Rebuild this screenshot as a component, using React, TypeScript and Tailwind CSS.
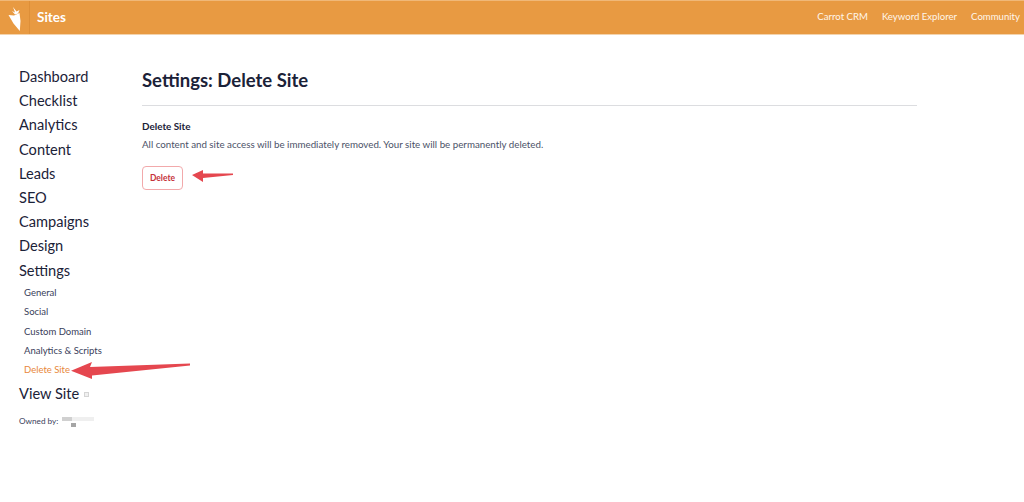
import React from "react";

const topItems = ["Dashboard", "Checklist", "Analytics", "Content", "Leads", "SEO", "Campaigns", "Design", "Settings"];
const subItems = ["General", "Social", "Custom Domain", "Analytics & Scripts"];

const Arrow = ({ className, width, height, d }: { className: string; width: number; height: number; d: string }) => (
  <svg className={className} width={width} height={height} viewBox={`0 0 ${width} ${height}`}>
    <path d={d} fill="#e5474f" />
  </svg>
);

export default function App() {
  return (
    <div className="relative h-[502px] w-[1024px] overflow-hidden bg-white font-['Lato',sans-serif] text-[#1b2238]">
      <header className="flex h-[35px] items-center border-t border-[#f0b878] border-b border-b-[#f3d3ad] bg-[#e89a42] text-white">
        <div className="flex h-full w-[30px] items-center justify-center border-r border-[#de8f38]">
          <svg width="16" height="30" viewBox="0 0 16 30">
            <path d="M1.5 12 L7 12.5 L12.5 10 L13.5 18 L12.8 28 L6.5 20.5 Z" fill="#fff" />
            <path d="M8 11.5 L5 8 L8 9.5 L6 4 L9.5 8.5 L12.5 7 L11 10.5 Z" fill="#fff" />
          </svg>
        </div>
        <span className="ml-[7px] text-[13.5px] font-bold">Sites</span>
        <nav className="ml-auto flex gap-[14px] pr-[4px] text-[9.6px] text-[#fff6ea]">
          <span>Carrot CRM</span>
          <span>Keyword Explorer</span>
          <span>Community</span>
        </nav>
      </header>

      <div className="flex">
        <aside className="w-[142px] shrink-0 pl-[19px] pt-[30px]">
          <ul className="flex flex-col">
            {topItems.map((item) => (
              <li key={item} className="h-[24.2px] text-[14.6px] leading-[24px]">
                {item}
              </li>
            ))}
          </ul>
          <ul className="mt-[0.5px] flex flex-col pl-[5px] text-[9.5px] text-[#39405a]">
            {subItems.map((item) => (
              <li key={item} className="h-[19.3px] leading-[19px]">
                {item}
              </li>
            ))}
            <li className="h-[19.3px] leading-[19px] text-[#e8873a]">Delete Site</li>
          </ul>
          <div className="mt-[2.5px] flex h-[24px] items-center text-[14.6px]">
            View Site
            <span className="ml-[5px] mt-[1px] h-[5px] w-[5px] border border-[#d4d4d4] bg-[#f0f0f0]" />
          </div>
          <div className="mt-[9px] flex items-start text-[8.2px] leading-[12px] text-[#39405a]">
            Owned by:
            <span className="ml-[4px] mt-[2px] flex flex-col">
              <span className="flex h-[4px]">
                <span className="h-[4px] w-[10px] bg-[#d0d0d0]" />
                <span className="h-[4px] w-[22px] bg-[#efefef]" />
              </span>
              <span className="ml-[9px] mt-[2px] h-[4px] w-[5px] bg-[#a5a5a5]" />
            </span>
          </div>
        </aside>

        <main className="w-[775px] pt-[34px]">
          <h1 className="text-[18.5px] leading-[22px] font-bold">Settings: Delete Site</h1>
          <div className="mt-[14px] border-t border-[#dcdde0]" />
          <h2 className="mt-[14px] text-[9.9px] leading-[12px] font-bold">Delete Site</h2>
          <p className="mt-[6px] text-[9.75px] leading-[12px] text-[#4b5268]">
            All content and site access will be immediately removed. Your site will be permanently deleted.
          </p>
          <button className="mt-[16px] flex h-[24px] w-[41px] items-center justify-center rounded-[4px] border border-[#f2a9ab] text-[8.5px] font-bold text-[#c5323a]">
            Delete
          </button>
        </main>
      </div>

      <Arrow
        className="absolute left-[191px] top-[168px]"
        width={44}
        height={16}
        d="M1 7 L12 2 L12 5.5 L42 5.6 L42 7 L12 10 L12 14 Z"
      />
      <Arrow
        className="absolute left-[71px] top-[358px]"
        width={121}
        height={24}
        d="M0 12.7 L21 4 L19 9 L119 5.5 L119 7.5 L21 17.5 L21 21 Z"
      />
    </div>
  );
}
